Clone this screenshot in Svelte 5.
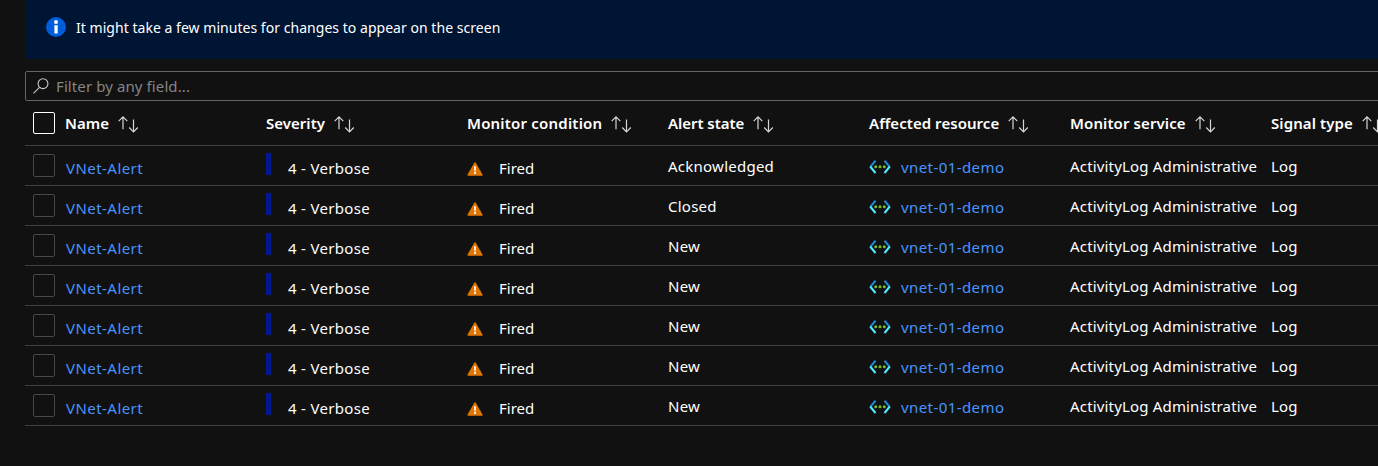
<script>
  const columns = ['Name', 'Severity', 'Monitor condition', 'Alert state', 'Affected resource', 'Monitor service', 'Signal type'];
  const spacing = [0.1, 0.03, 0.2, -0.05, 0.05, 0.1, 0.1];
  const rows = ['Acknowledged', 'Closed', 'New', 'New', 'New', 'New', 'New'];
</script>

<main>
  <section class="banner">
    <svg class="info" width="20" height="20" viewBox="0 0 20 20">
      <circle cx="10" cy="10" r="10" fill="#015cda" />
      <circle cx="10" cy="5" r="2" fill="#fff" />
      <path d="M8.4 8.2h3.3v8.3H8.4z" fill="#fff" />
    </svg>
    <span>It might take a few minutes for changes to appear on the screen</span>
  </section>

  <div class="filter">
    <svg width="16" height="16" viewBox="0 0 16 16" fill="none" stroke="#c8c8c8" stroke-width="1.1">
      <circle cx="10" cy="5.7" r="4.9" />
      <path d="M6.5 9.3L.5 15.3" />
    </svg>
    <span>Filter by any field...</span>
  </div>

  <div class="row head">
    <i class="check"></i>
    {#each columns as c, i}
      <div class="cell" style:letter-spacing="{spacing[i]}px">
        <span>{c}</span>
        <svg class="sort" width="21" height="17" viewBox="0 0 21 17" fill="none" stroke="#d6d6d6" stroke-width="1.2">
          <path d="M5 13.2V1.2M.7 5.2L5 .9l4.3 4.3M15.5 3.5v12M11.2 11.5l4.3 4.3 4.3-4.3" />
        </svg>
      </div>
    {/each}
  </div>

  {#each rows as state}
    <div class="row">
      <i class="check"></i>
      <div class="cell name"><a href="#top">VNet-Alert</a></div>
      <div class="cell severity"><b></b><span>4 - Verbose</span></div>
      <div class="cell condition">
        <svg width="16" height="14" viewBox="0 0 16 14">
          <path d="M7.3.7q.7-1.1 1.4 0l6.8 11.7q.5 1.3-.7 1.3H1.2q-1.2 0-.7-1.3z" fill="#df7500" />
          <path d="M7 4.2h2l-.3 5H7.3z" fill="#fff" />
          <circle cx="8" cy="10.9" r="1.1" fill="#fff" />
        </svg>
        <span>Fired</span>
      </div>
      <div class="cell state">{state}</div>
      <div class="cell resource">
        <svg width="22" height="14" viewBox="0 0 22 14" fill="none" stroke-width="2.1">
          <path d="M6.5.8L1.2 6.9M15.5.8L20.8 6.9" stroke="#1c86d8" />
          <path d="M1.2 6.5L6.5 13M20.8 6.5L15.5 13" stroke="#50e6ff" />
          <g fill="#76bc2d"><circle cx="6.7" cy="6.8" r="1.5" /><circle cx="11" cy="6.8" r="1.5" /><circle cx="15.3" cy="6.8" r="1.5" /></g>
        </svg>
        <a href="#top">vnet-01-demo</a>
      </div>
      <div class="cell service">ActivityLog Administrative</div>
      <div class="cell signal">Log</div>
    </div>
  {/each}
</main>

<style>
  :global(body) { background: #111; }
  main {
    box-sizing: border-box;
    width: 1378px;
    height: 466px;
    padding-left: 25px;
    overflow: hidden;
    background: #111;
    color: #fff;
    font: 15px/20px "Segoe UI", "Noto Sans", sans-serif;
    white-space: nowrap;
  }
  svg { display: block; flex: none; }
  svg g { stroke: none; }
  a { color: #4894fe; text-decoration: none; }
  .banner {
    box-sizing: border-box;
    display: flex;
    height: 59px;
    padding: 17px 0 0 21px;
    gap: 10px;
    background: #001433;
    border-radius: 0 0 0 2px;
    font-size: 14px;
    letter-spacing: 0.035px;
  }
  .banner span { padding-top: 1px; }
  .filter {
    box-sizing: border-box;
    display: flex;
    align-items: center;
    width: 1400px;
    height: 30px;
    margin-top: 12px;
    padding-left: 7px;
    gap: 7px;
    border: 1px solid #666;
    border-radius: 2px;
    color: #858585;
    letter-spacing: 0.1px;
  }
  .row {
    box-sizing: border-box;
    display: flex;
    width: 1460px;
    height: 40px;
    padding-left: 8px;
    border-bottom: 1px solid #404040;
  }
  .head { height: 45px; font-weight: 600; }
  .check {
    box-sizing: border-box;
    flex: none;
    width: 22px;
    height: 23px;
    margin: 8px 10px 0 0;
    border: 1px solid #484848;
    border-radius: 2px;
  }
  .head .check { height: 22px; margin-top: 11px; border-color: #fff; }
  .cell { display: flex; flex: none; width: 201px; padding-top: 10px; box-sizing: border-box; }
  .head .cell { padding-top: 12px; gap: 9px; }
  .sort { margin-top: 3px; }
  .name { padding-top: 12px; padding-left: 1px; letter-spacing: 0.45px; }
  .severity { padding-top: 12px; letter-spacing: 0.32px; }
  .severity b { width: 5px; height: 22px; margin: -5px 17px 0 0; background: #00188f; }
  .condition { padding-top: 12px; gap: 16px; }
  .condition svg { margin-top: 4px; }
  .state { letter-spacing: 0.25px; }
  .resource { padding-top: 11px; gap: 10px; letter-spacing: 0.42px; }
  .resource svg { margin-top: 3px; }
  .service { letter-spacing: 0.17px; }
  .signal { letter-spacing: 0.2px; }
</style>
